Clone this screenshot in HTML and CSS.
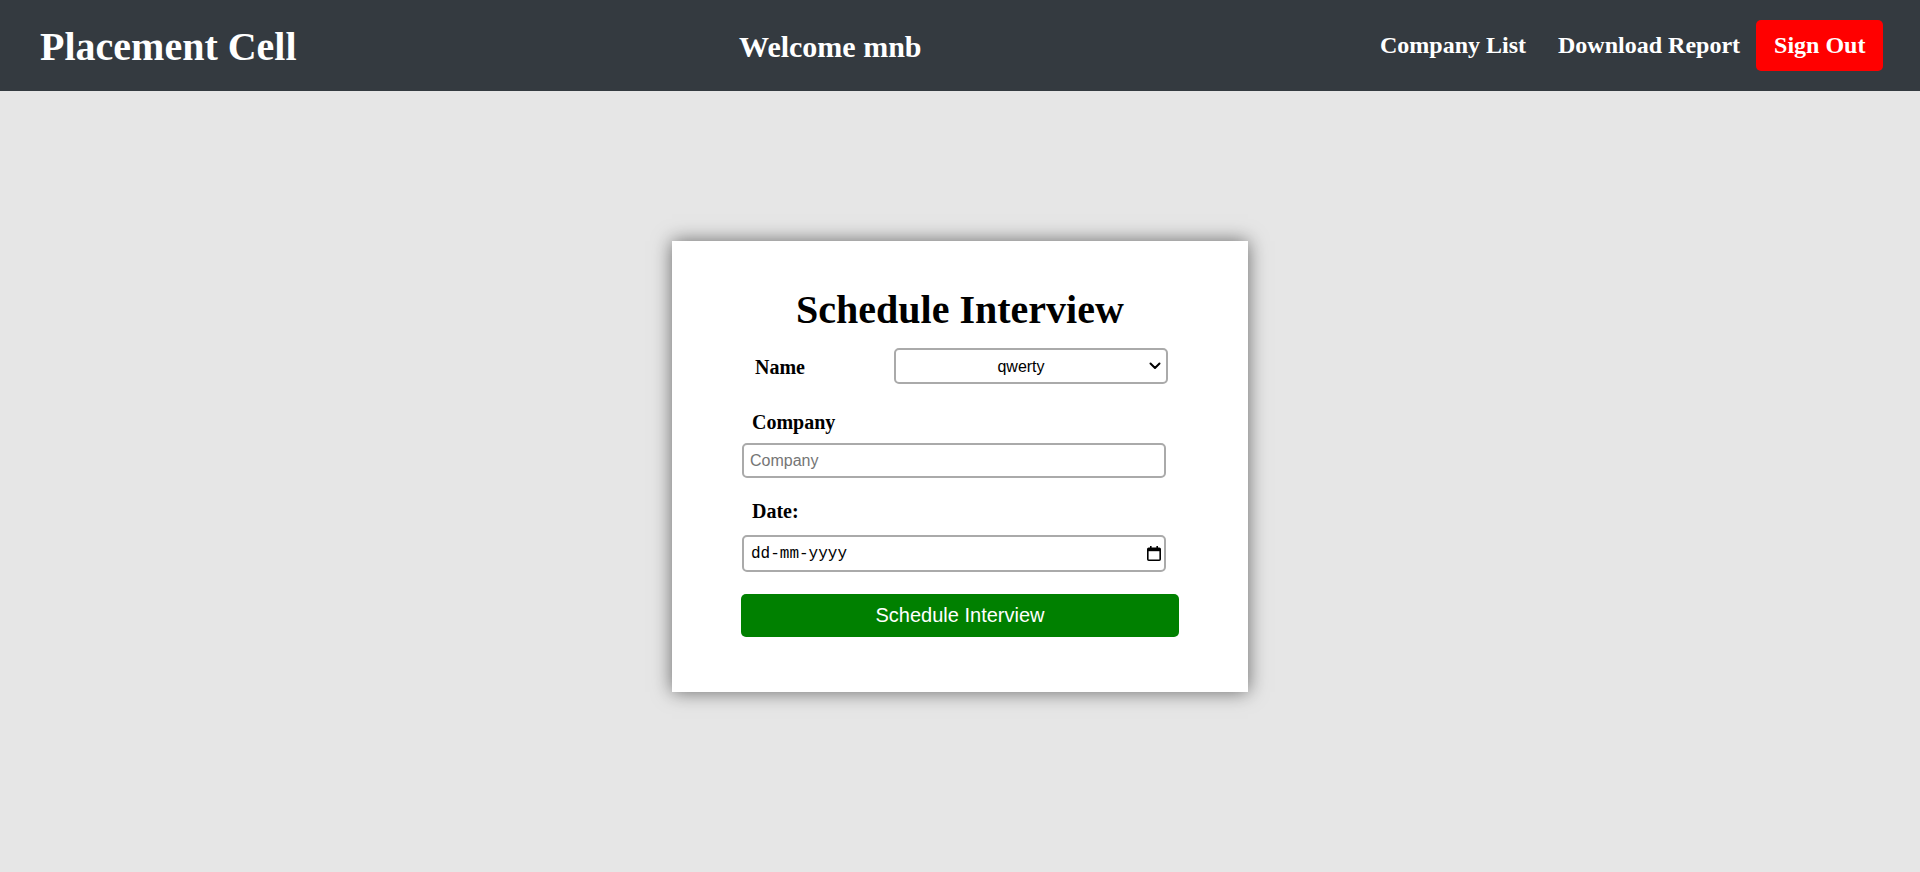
FILE: index.html
```html
<!DOCTYPE html>
<html lang="en">
<head>
<meta charset="utf-8">
<title>Placement Cell</title>
<link rel="stylesheet" href="styles.css">
</head>
<body>
<header class="topbar">
  <h1 class="brand">Placement Cell</h1>
  <h2 class="welcome">Welcome mnb</h2>
  <nav class="nav">
    <a class="nav-link" href="#">Company List</a>
    <a class="nav-link" href="#">Download Report</a>
    <a class="nav-signout" href="#">Sign Out</a>
  </nav>
</header>
<main class="main">
  <section class="card">
    <h1 class="card-title">Schedule Interview</h1>
    <form class="form">
      <div class="name-row">
        <label class="name-label" for="student">Name</label>
        <div class="select-wrap">
          <select class="name-select" id="student">
            <option>qwerty</option>
          </select>
          <svg class="select-arrow" width="12" height="8" viewBox="0 0 12 8" aria-hidden="true">
            <path d="M1.5 1.5 L6 6 L10.5 1.5" fill="none" stroke="#000" stroke-width="2" stroke-linecap="round" stroke-linejoin="round"/>
          </svg>
        </div>
      </div>
      <label class="field-label company-label" for="company">Company</label>
      <input class="text-input" id="company" type="text" placeholder="Company">
      <label class="field-label date-label" for="date">Date:</label>
      <div class="date-wrap">
        <input class="date-input" id="date" type="text" placeholder="dd-mm-yyyy">
        <svg class="date-icon" width="14" height="15" viewBox="0 0 14 15" aria-hidden="true">
          <rect x="3" y="0" width="1.6" height="3" fill="#000"/>
          <rect x="9.4" y="0" width="1.6" height="3" fill="#000"/>
          <rect x="0.8" y="2.2" width="12.4" height="12" rx="1" fill="none" stroke="#000" stroke-width="1.6"/>
          <rect x="0.8" y="2.2" width="12.4" height="3" fill="#000"/>
        </svg>
      </div>
      <button class="submit" type="button">Schedule Interview</button>
    </form>
  </section>
</main>
</body>
</html>
```

FILE: styles.css
```css
html, body {
  margin: 0;
  padding: 0;
}
body {
  background: #e6e6e6;
  font-family: "Liberation Serif", "Times New Roman", serif;
  min-height: 872px;
}
.topbar {
  height: 91px;
  background: #343a40;
  display: flex;
  align-items: center;
  justify-content: space-between;
  padding: 0 37px 0 40px;
  box-sizing: border-box;
  color: #fff;
}
.brand {
  margin: 0;
  font-size: 40px;
  font-weight: bold;
  line-height: 46px;
  position: relative;
  top: 1px;
}
.welcome {
  margin: 0;
  font-size: 30px;
  font-weight: bold;
  line-height: 35px;
  position: relative;
  top: 1px;
}
.nav {
  display: flex;
  align-items: center;
}
.nav-link {
  color: #fff;
  text-decoration: none;
  font-size: 24px;
  font-weight: bold;
  line-height: 27px;
  padding: 12px 16px;
}
.nav-signout {
  color: #fff;
  text-decoration: none;
  font-size: 24px;
  font-weight: bold;
  line-height: 27px;
  padding: 12px 17.6px 12px 18px;
  background: #ff0000;
  border-radius: 5px;
}
.main {
  padding-top: 150px;
}
.card {
  width: 576px;
  margin: 0 auto;
  background: #fff;
  box-shadow: 0 0 18px rgba(0, 0, 0, 0.55);
  padding: 46px 0 55px;
  box-sizing: border-box;
}
.card-title {
  margin: 0;
  text-align: center;
  font-size: 40px;
  line-height: 46px;
  font-weight: bold;
  color: #000;
}
.form {
  width: 438px;
  margin: 0 auto;
  display: flex;
  flex-direction: column;
  align-items: flex-start;
}
.name-row {
  margin-top: 15px;
  display: flex;
  align-items: center;
  width: 100%;
}
.name-label {
  width: 153px;
  box-sizing: border-box;
  padding-left: 14px;
  font-size: 20px;
  font-weight: bold;
  line-height: 23px;
  position: relative;
  top: 1px;
}
.select-wrap {
  position: relative;
  width: 274px;
  height: 36px;
}
.name-select {
  -webkit-appearance: none;
  appearance: none;
  display: block;
  width: 274px;
  height: 36px;
  box-sizing: border-box;
  border: 2px solid #aaa;
  border-radius: 5px;
  background: #fff;
  color: #000;
  padding: 0 24px 0 4px;
  font-family: "Liberation Sans", Arial, sans-serif;
  font-size: 16px;
  text-align: center;
  text-align-last: center;
}
.select-arrow {
  position: absolute;
  right: 7px;
  top: 14px;
  pointer-events: none;
}
.field-label {
  display: block;
  padding-left: 11px;
  font-size: 20px;
  font-weight: bold;
  line-height: 23px;
}
.company-label {
  margin-top: 27px;
}
.text-input {
  margin: 9px 0 0 1px;
  width: 424px;
  height: 35px;
  box-sizing: border-box;
  border: 2px solid #aaa;
  border-radius: 5px;
  padding: 0 6px;
  font-family: "Liberation Sans", Arial, sans-serif;
  font-size: 16px;
  color: #000;
}
.text-input::placeholder {
  color: #757575;
}
.date-label {
  margin-top: 22px;
}
.date-wrap {
  position: relative;
  margin: 12px 0 0 1px;
  width: 424px;
  height: 37px;
}
.date-input {
  display: block;
  width: 424px;
  height: 37px;
  box-sizing: border-box;
  border: 2px solid #aaa;
  border-radius: 5px;
  padding: 0 7px;
  font-family: "Liberation Mono", "Courier New", monospace;
  font-size: 16px;
  color: #000;
  background: #fff;
}
.date-input::placeholder {
  color: #000;
}
.date-icon {
  position: absolute;
  right: 5px;
  top: 11px;
  pointer-events: none;
}
.submit {
  margin-top: 22px;
  width: 438px;
  height: 43px;
  border: none;
  border-radius: 5px;
  background: #008000;
  color: #fff;
  font-family: "Liberation Sans", Arial, sans-serif;
  font-size: 20px;
  cursor: pointer;
}
```
